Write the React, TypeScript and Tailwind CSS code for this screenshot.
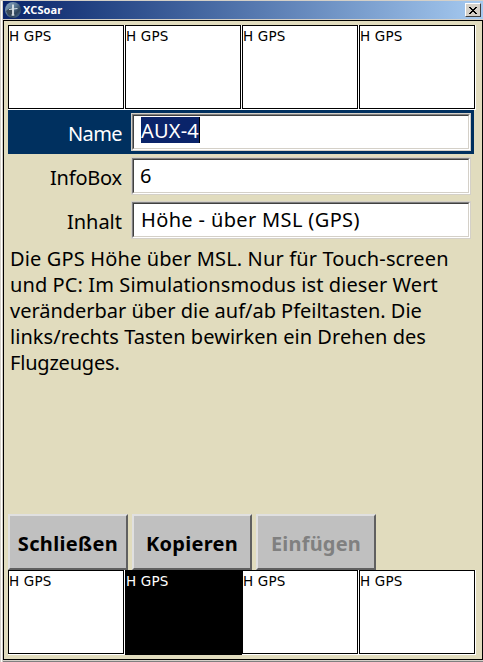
type BoxProps = { selected?: boolean };

function InfoBox({ selected = false }: BoxProps) {
  return (
    <div
      className={
        selected
          ? "-mr-px mb-[-1px] h-[85px] w-[117px] border border-black bg-black text-white"
          : "h-[84px] w-[116px] border border-black bg-white text-black"
      }
    >
      <div className="mt-[2px] font-['DejaVu_Sans',sans-serif] text-[13.5px] leading-4 tracking-[0.2px]">H GPS</div>
    </div>
  );
}

function BoxRow({ selected }: { selected?: number }) {
  return (
    <div className="flex h-[85px] w-[468px] gap-px bg-white">
      {[0, 1, 2, 3].map((i) => (
        <InfoBox key={i} selected={i === selected} />
      ))}
    </div>
  );
}

type FieldProps = { label: string; value: string; active?: boolean; labelClass: string; valueClass: string };

function Field({ label, value, active = false, labelClass, valueClass }: FieldProps) {
  return (
    <div className={`flex h-11 w-[466px] items-start pt-[3px] ${active ? "bg-[#00305f] text-white" : "text-black"}`}>
      <div className={`w-[114px] pt-1 text-right text-[20px] leading-[34px] ${labelClass}`}>{label}</div>
      <div className="ml-[9px] h-[38px] w-[340px] border border-[#d4d0c8] bg-white">
        <div className="h-full border-b border-l border-r border-t border-b-white border-l-[#808080] border-r-white border-t-[#808080]">
          <div className="h-full border-b border-l border-r border-t border-b-[#d4d0c8] border-l-[#404040] border-r-[#d4d0c8] border-t-[#404040] pl-[7px] pt-px text-black">
            <span
              className={`inline-block h-[26px] whitespace-nowrap text-[20px] ${valueClass} ${
                active ? "border-r border-black bg-[#0a246a] leading-[28px] text-white" : "leading-[29px]"
              }`}
            >
              {value}
            </span>
          </div>
        </div>
      </div>
    </div>
  );
}

function Button({ label, textClass }: { label: string; textClass: string }) {
  return (
    <div className="flex h-14 w-[120px] items-center justify-center border-2 border-b-[#606060] border-l-[#e0e0e0] border-r-[#606060] border-t-[#e0e0e0] bg-[#c0c0c0] pt-[3px]">
      <span className={`whitespace-nowrap text-[20px] font-bold leading-6 ${textClass}`}>{label}</span>
    </div>
  );
}

function AppIcon() {
  return (
    <svg className="h-4 w-4" viewBox="0 0 16 16">
      <defs>
        <linearGradient id="globe" x1="0" y1="0" x2="1" y2="1">
          <stop offset="0" stopColor="#8fabc4" />
          <stop offset="0.45" stopColor="#5a7894" />
          <stop offset="0.7" stopColor="#2d4258" />
          <stop offset="1" stopColor="#6289ae" />
        </linearGradient>
      </defs>
      <circle cx="8" cy="8" r="8" fill="url(#globe)" />
      <path d="M1 9 5 6 8 9 6 14 3 13Z" fill="#3a4a58" />
      <path d="M8 2.5v11" stroke="#f2f5f5" strokeWidth="1.6" fill="none" />
      <path d="M4 7.5 8 7l4.5-.5M6.5 13h3" stroke="#d5dfe5" strokeWidth="1.2" fill="none" />
    </svg>
  );
}

const help = [
  { text: "Die GPS Höhe über MSL. Nur für Touch-screen", cls: "tracking-[0.14px]" },
  { text: "und PC: Im Simulationsmodus ist dieser Wert", cls: "tracking-[0.1px]" },
  { text: "veränderbar über die auf/ab Pfeiltasten. Die", cls: "tracking-[-0.02px]" },
  { text: "links/rechts Tasten bewirken ein Drehen des", cls: "tracking-[0.05px]" },
  { text: "Flugzeuges.", cls: "tracking-[-0.2px]" },
];

export default function App() {
  return (
    <div className="flex h-[662px] w-[483px] flex-col overflow-hidden border-l border-t border-[#d4d0c8] bg-[#d4d0c8] font-['Noto_Sans','DejaVu_Sans',sans-serif]">
      <div className="flex grow flex-col border-l border-white pl-px">
        <div className="flex h-[18px] items-center bg-linear-to-r from-[#0a246a] to-[#a6caf0] pl-[2px] pr-[2px]">
          <AppIcon />
          <span className="ml-[2px] grow text-[11px] font-bold leading-4 tracking-[0.1px] text-white">XCSoar</span>
          <div className="flex h-[14px] w-4 items-center justify-center border border-b-[#404040] border-l-white border-r-[#404040] border-t-white bg-[#d4d0c8]">
            <svg className="h-[7px] w-2" viewBox="0 0 8 7" shapeRendering="crispEdges">
              <path d="M0 0h2v1h1v1h2V1h1V0h2v1H7v1H6v1H5v1h1v1h1v1h1v1H6V6H5V5H3v1H2v1H0V6h1V5h1V4h1V3H2V2H1V1H0Z" />
            </svg>
          </div>
        </div>
        <div className="mt-px flex h-[640px] w-[480px] flex-col border border-black bg-[#e1dcbe] pl-1 pt-1">
          <BoxRow />
          <Field label="Name" value="AUX-4" active labelClass="tracking-[-0.6px]" valueClass="tracking-[0.2px]" />
          <Field label="InfoBox" value="6" labelClass="tracking-[-0.2px]" valueClass="-ml-px" />
          <Field label="Inhalt" value="Höhe - über MSL (GPS)" labelClass="" valueClass="tracking-[0.36px]" />
          <div className="h-[272px] pl-[2px] pt-1 text-[20px] leading-[26px]">
            {help.map((line) => (
              <div key={line.text} className={`whitespace-nowrap ${line.cls}`}>
                {line.text}
              </div>
            ))}
          </div>
          <div className="flex gap-1">
            <Button label="Schließen" textClass="tracking-[0.35px] text-black" />
            <Button label="Kopieren" textClass="tracking-[0.25px] text-black" />
            <Button label="Einfügen" textClass="tracking-[0.2px] text-[#808080]" />
          </div>
          <BoxRow selected={1} />
        </div>
        <div className="mt-px h-px bg-[#808080]" />
      </div>
    </div>
  );
}
